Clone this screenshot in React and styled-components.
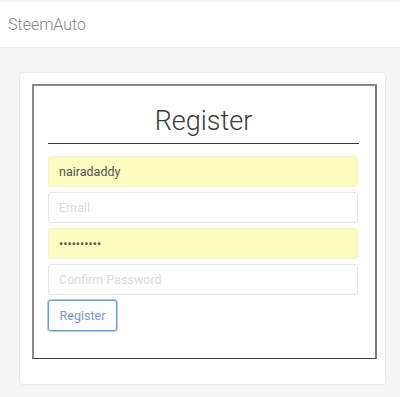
import React from "react";
import styled, { createGlobalStyle } from "styled-components";

const Global = createGlobalStyle`
  html, body { margin: 0; padding: 0; background: #f5f5f5; }
  body { font-family: Roboto, "Liberation Sans", Arial, sans-serif; }
  * { box-sizing: border-box; }
`;

const Page = styled.div`
  padding-top: 2px;
  min-height: 397px;
  background: #f5f5f5;
`;

const Navbar = styled.nav`
  height: 46px;
  background: #fff;
  border-bottom: 1px solid #e9e9e9;
  display: flex;
  align-items: center;
  padding-left: 8px;
`;

const Brand = styled.span`
  font-size: 16px;
  color: #858585;
  font-weight: 300;
  padding-bottom: 1px;
`;

const Main = styled.main`
  padding: 24px 0 0 19px;
`;

const Card = styled.div`
  width: 367px;
  height: 313px;
  background: #fff;
  border: 1px solid #ebebeb;
  border-radius: 4px;
  padding: 11px 0 0 12px;
`;

const Box = styled.form`
  width: 345px;
  height: 275px;
  border-style: solid;
  border-width: 2px 2px 1px 2px;
  border-color: #8a8a8a #7a7a7a #3c3c3c #8a8a8a;
  padding: 0 16px 0 14px;
`;

const Title = styled.h1`
  margin: 0 0 12px;
  height: 58px;
  border-bottom: 1px solid #3a3a3a;
  font-weight: 300;
  font-size: 27px;
  color: #3a3a3a;
  text-align: center;
  display: flex;
  align-items: flex-end;
  justify-content: center;
  padding-bottom: 8px;
  line-height: 1;
`;

const Field = styled.input`
  display: block;
  width: 310px;
  height: 31px;
  margin: 0 0 5px;
  padding: 0 10px;
  border: 1px solid ${(p) => (p.$filled ? "#f2f5c8" : "#e6e6e6")};
  border-radius: 3px;
  background: ${(p) => (p.$filled ? "#fafdbf" : "#fff")};
  font-family: Roboto, "Liberation Sans", Arial, sans-serif;
  font-size: 12.5px;
  color: #555;
  outline: none;
  &::placeholder { color: #dadada; }
`;

const Button = styled.button`
  margin-top: 0;
  width: 69px;
  height: 31px;
  background: #fcfdff;
  border: 1px solid #7396d4;
  box-shadow: 0 0 0 1px rgba(115, 150, 212, 0.5);
  border-radius: 3px;
  font-family: Roboto, "Liberation Sans", Arial, sans-serif;
  font-size: 12.5px;
  color: #8099c6;
  padding: 0;
`;

export default function App() {
  return (
    <>
      <Global />
      <Page>
        <Navbar>
          <Brand>SteemAuto</Brand>
        </Navbar>
        <Main>
          <Card>
            <Box onSubmit={(e) => e.preventDefault()}>
              <Title>Register</Title>
              <Field $filled type="text" defaultValue="nairadaddy" />
              <Field type="email" placeholder="Email" />
              <Field $filled type="password" defaultValue="0123456789" />
              <Field type="password" placeholder="Confirm Password" />
              <Button type="submit">Register</Button>
            </Box>
          </Card>
        </Main>
      </Page>
    </>
  );
}
